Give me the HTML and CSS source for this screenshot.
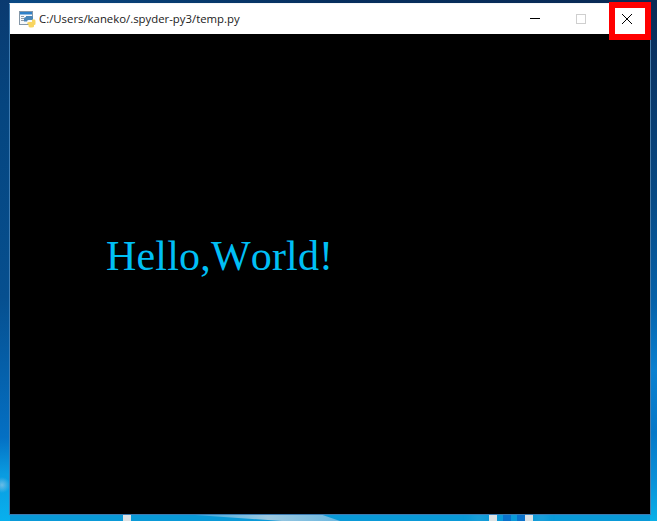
FILE: index.html
```html
<!DOCTYPE html>
<html lang="en">
<head>
<meta charset="utf-8">
<title>temp.py</title>
<link rel="stylesheet" href="styles.css">
</head>
<body>
<div class="desktop">
  <div class="streak"></div>
  <div class="post post-a"></div>
  <div class="post post-b"></div>
  <div class="post post-c"></div>
  <div class="window">
    <div class="titlebar">
      <svg class="app-icon" width="17" height="17" viewBox="0 0 17 17">
        <rect x="0.5" y="0.5" width="13" height="13" fill="#f6f8fa" stroke="#8497a8"/>
        <rect x="1" y="1" width="12" height="2.5" fill="#2f80c8"/>
        <rect x="2" y="5" width="3" height="1" fill="#8f9ca8"/>
        <rect x="2" y="7" width="3" height="1" fill="#8f9ca8"/>
        <rect x="2" y="9" width="3" height="1" fill="#8f9ca8"/>
        <path d="M5 10.5V7.5Q5 6 7 6L7 5H13Q14 5 14 6.5V9H9.5Q8 9 8 10.5Z" fill="#4a86b8"/>
        <path d="M8 12.5Q8 11 10 11H13V8.5H15.5Q16.5 8.5 16.5 10.5V13Q16.5 14 15 14V15.5Q15 16.5 12.5 16.5Q9.5 16.5 9.5 15V13.5Z" fill="#f8d560"/>
      </svg>
      <span class="title">C:/Users/kaneko/.spyder-py3/temp.py</span>
      <div class="controls">
        <div class="control">
          <svg width="10" height="10" viewBox="0 0 10 10"><path d="M0 4.5H10" stroke="#000" stroke-width="1"/></svg>
        </div>
        <div class="control">
          <svg width="10" height="10" viewBox="0 0 10 10"><rect x="0.5" y="0.5" width="9" height="9" fill="none" stroke="#cfcfcf"/></svg>
        </div>
        <div class="control close">
          <svg width="12" height="12" viewBox="0 0 12 12"><path d="M1 1L11 11M11 1L1 11" stroke="#000" stroke-width="1"/></svg>
        </div>
      </div>
    </div>
    <div class="canvas">
      <p class="hello">Hello,World!</p>
    </div>
    <div class="highlight"></div>
  </div>
</div>
</body>
</html>
```
FILE: styles.css
```css
* { box-sizing: border-box; }
html, body { margin: 0; height: 100%; }
body { overflow: hidden; }
.desktop {
  position: relative;
  width: 657px;
  height: 521px;
  padding: 3px 6px 6px 9px;
  background-color: #0a9ad8;
  background-image:
    radial-gradient(ellipse 8px 8px at 2px 485px, rgba(130,195,230,.8) 0%, rgba(130,195,230,0) 100%),
    linear-gradient(180deg, #0a3a70 0%, #05457f 20%, #064f8f 57%, #0560aa 71%, #0470c4 84%, #0a9be0 91%, #08b0ee 100%),
    linear-gradient(180deg, #0a2a55 0%, #074a85 38%, #0562aa 58%, #0a80d0 71%, #0678c8 83%, #0a90d8 92%, #0ab0e8 100%),
    linear-gradient(90deg, #0a4a85 0%, #062f5e 50%, #0a2a55 100%);
  background-repeat: no-repeat;
  background-position: 0 0, 0 0, 100% 0, 0 0;
  background-size: 10px 100%, 10px 100%, 7px 100%, 100% 4px;
}
.streak {
  position: absolute;
  left: 195px;
  top: 515px;
  width: 145px;
  height: 6px;
  background: linear-gradient(90deg, #3aa8dc 0%, #9cc8e0 50%, #6cb8e0 100%);
  clip-path: polygon(0 0, 88% 0, 100% 100%, 60% 100%);
}
.post {
  position: absolute;
  top: 515px;
  width: 8px;
  height: 6px;
  background: #dde2e4;
}
.post-a { left: 123px; }
.post-b { left: 489px; box-shadow: -14px 0 12px rgba(120,190,230,.7), 14px 0 0 #0a72cc, 28px 0 0 #0a72cc; }
.post-c { left: 525px; box-shadow: 12px 0 10px rgba(120,190,230,.5); }
.window {
  position: relative;
  width: 642px;
  height: 512px;
  border: 1px solid #3d7ab0;
  border-top: 1px solid #f4f6f8;
  border-right-color: #4a7ca8;
  display: flex;
  flex-direction: column;
}
.titlebar {
  height: 30px;
  background: #fff;
  display: flex;
  align-items: center;
  padding-left: 9px;
  flex: none;
}
.app-icon { flex: none; margin-right: 3px; }
.title {
  font: 11.36px/16px "Open Sans", sans-serif;
  color: #1a1a1a;
  white-space: nowrap;
}
.controls {
  margin-left: auto;
  display: flex;
  height: 100%;
  align-items: center;
}
.control {
  width: 46px;
  height: 100%;
  display: flex;
  align-items: center;
  justify-content: center;
}
.canvas {
  flex: 1;
  background: #000;
  display: flex;
  padding: 198px 0 0 96px;
}
.hello {
  margin: 0;
  font: 42px/48px "Liberation Serif", "Times New Roman", serif;
  font-kerning: none;
  letter-spacing: 0.18px;
  color: #00bff5;
}
.highlight {
  position: absolute;
  top: -2px;
  right: -1px;
  width: 42px;
  height: 38px;
  border: 6px solid #ff0000;
  pointer-events: none;
}
```
